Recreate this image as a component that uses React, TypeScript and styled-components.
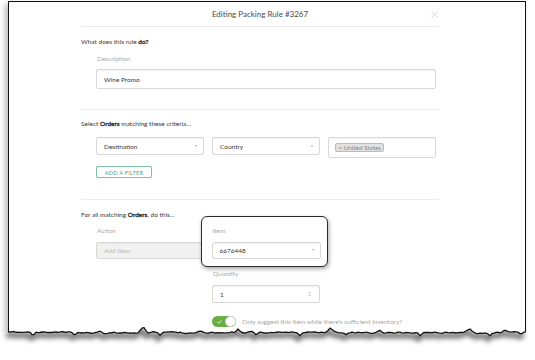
import React from "react";
import styled, { createGlobalStyle } from "styled-components";

const GlobalStyle = createGlobalStyle`
  html, body {
    margin: 0;
    padding: 0;
    background: #fff;
    overflow: hidden;
  }
  body {
    font-family: Lato, "Open Sans", sans-serif;
    -webkit-font-smoothing: antialiased;
  }
`;

const Frame = styled.div`
  width: 518px;
  margin: 1px 0 0 8px;
`;

const Paper = styled.div`
  box-sizing: border-box;
  height: 341px;
  border: 1.5px solid #111;
  border-bottom: none;
  background: #fff;
  box-shadow: -3px 3px 6px rgba(0, 0, 0, 0.28);
  padding-left: 72px;
`;

const Inner = styled.div`
  width: 358px;
`;

const TitleBar = styled.div`
  height: 24px;
  display: grid;
  grid-template-columns: 1fr auto 1fr;
  align-items: center;
  border-bottom: 1px solid #e8e8e8;
`;

const Title = styled.div`
  grid-column: 2;
  font-size: 8px;
  color: #4a4a4a;
`;

const Close = styled.svg`
  justify-self: end;
  width: 7px;
  height: 7px;
  margin-right: 1px;
`;

const Section = styled.div<{ $top: number; $bottom: number; $last?: boolean }>`
  padding: ${(p) => p.$top}px 0 ${(p) => p.$bottom}px;
  border-bottom: ${(p) => (p.$last ? "none" : "1px solid #ececec")};
`;

const Heading = styled.div`
  font-size: 6.5px;
  line-height: 8px;
  color: #3a3a3a;
  b {
    color: #1e1e1e;
    font-weight: 400;
    -webkit-text-stroke: 0.3px #1e1e1e;
  }
`;

const Fields = styled.div<{ $mt: number; $rowGap?: number }>`
  display: grid;
  grid-template-columns: 108px 108px 108px;
  column-gap: 8px;
  row-gap: ${(p) => p.$rowGap ?? 0}px;
  align-items: start;
  padding-left: 15px;
  margin-top: ${(p) => p.$mt}px;
`;

const Field = styled.div<{ $gap: number; $col?: string }>`
  display: flex;
  flex-direction: column;
  gap: ${(p) => p.$gap}px;
  grid-column: ${(p) => p.$col ?? "auto"};
`;

const Highlight = styled(Field)`
  position: relative;
  z-index: 1;
  margin: -11px -8px -9px -11px;
  padding: 9.5px 6.5px 7.5px 9.5px;
  border: 1.5px solid #2b2b2b;
  border-radius: 6px;
  background: #fff;
  box-shadow: 1px 2px 4px rgba(0, 0, 0, 0.35);
`;

const Label = styled.div`
  font-size: 6.5px;
  line-height: 8px;
  color: #a9a9a9;
  padding-left: 1px;
`;

const Box = styled.div<{ $h: number; $disabled?: boolean }>`
  box-sizing: border-box;
  height: ${(p) => p.$h}px;
  border: 1px solid #d8d8d8;
  border-radius: 2px;
  background: ${(p) => (p.$disabled ? "#f1f1f1" : "#fff")};
  box-shadow: inset 0 1px 1px rgba(0, 0, 0, 0.05);
  display: flex;
  align-items: center;
  padding: 0 6px 0 7px;
  font-size: 6.5px;
  color: ${(p) => (p.$disabled ? "#b8b8b8" : "#3a3a3a")};
`;

const Caret = styled.span`
  margin-left: auto;
  width: 0;
  height: 0;
  border-left: 1.5px solid transparent;
  border-right: 1.5px solid transparent;
  border-top: 2px solid #aaa;
`;

const Spinner = styled.svg`
  margin-left: auto;
  margin-right: 2px;
  width: 3px;
  height: 6px;
`;

const Tag = styled.span`
  display: inline-flex;
  align-items: center;
  height: 9px;
  box-sizing: border-box;
  padding: 0 2.5px;
  margin-left: -1px;
  background: #e1e1e1;
  border: 1px solid #bbbbbb;
  border-radius: 2px;
  font-size: 6.3px;
  color: #888;
`;

const FilterButton = styled.div`
  box-sizing: border-box;
  width: 56px;
  height: 12px;
  margin: 8px 0 0 15px;
  border: 1px solid #7cc2a3;
  border-radius: 1px;
  display: flex;
  align-items: center;
  justify-content: center;
  font-size: 5.7px;
  letter-spacing: 0.2px;
  color: #5a9f80;
`;

const ToggleRow = styled.div`
  grid-column: 2 / 4;
  display: flex;
  align-items: center;
  gap: 6px;
  margin-top: 2px;
  font-size: 6.5px;
  color: #a8a8a8;
  white-space: nowrap;
`;

const Toggle = styled.div`
  box-sizing: border-box;
  width: 24px;
  height: 11px;
  border-radius: 6px;
  background: #6aaf45;
  display: flex;
  align-items: center;
  justify-content: space-between;
  padding-left: 5px;
`;

const Knob = styled.span`
  box-sizing: border-box;
  width: 11px;
  height: 11px;
  border-radius: 50%;
  background: #fff;
  border: 1px solid #d4d4d4;
`;

const Tear = styled.svg`
  position: relative;
  display: block;
  margin: -20px 0 0 -8px;
`;

// torn paper edge, page y minus 322
const tearLine = (() => {
  let seed = 11;
  const rnd = () => {
    seed = (seed * 16807) % 2147483647;
    return seed / 2147483647;
  };
  const feats: [number, number, number][] = [
    [33, 4.5, 2.5], [75, 3.5, 2.5], [100, -2, 4], [143, -7, 5], [160, 3.5, 3],
    [200, -1.5, 5], [238, -3.5, 4], [256, 3, 3], [300, 3, 3], [330, -4.5, 5],
    [346, 2, 3], [380, -2, 4], [420, 3, 3], [470, -3.5, 5], [490, 2.5, 3],
    [505, -4, 4], [521, 2, 3],
  ];
  let drift = 0;
  const pts: [number, number][] = [];
  for (let x = 8; x <= 527; x += 2) {
    drift += (rnd() - 0.5) * 1.8;
    drift *= 0.7;
    let y = 10.5 + drift;
    for (const [fx, dy, hw] of feats) {
      y += dy * Math.max(0, 1 - Math.abs(x - fx) / hw);
    }
    pts.push([x, Math.round(y * 10) / 10]);
  }
  return pts;
})();

const linePath = "M" + tearLine.map(([x, y]) => `${x} ${y}`).join(" L");
const belowPath =
  `M0 ${tearLine[0][1]} L` +
  tearLine.map(([x, y]) => `${x} ${y}`).join(" L") +
  ` L535 ${tearLine[tearLine.length - 1][1]} L535 38 L0 38 Z`;

export default function App() {
  return (
    <>
      <GlobalStyle />
      <Frame>
        <Paper>
          <Inner>
            <TitleBar>
              <Title>Editing Packing Rule #3267</Title>
              <Close viewBox="0 0 7 7">
                <path d="M0.5 0.5 L6.5 6.5 M6.5 0.5 L0.5 6.5" stroke="#cfcfcf" strokeWidth="0.8" />
              </Close>
            </TitleBar>

            <Section $top={11} $bottom={20}>
              <Heading>
                What does this rule <b>do?</b>
              </Heading>
              <Fields $mt={9}>
                <Field $gap={6} $col="1 / -1">
                  <Label>Description</Label>
                  <Box $h={20}>Wine Promo</Box>
                </Field>
              </Fields>
            </Section>

            <Section $top={10} $bottom={21}>
              <Heading>
                Select <b>Orders</b> matching these criteria...
              </Heading>
              <Fields $mt={9}>
                <Box $h={18}>
                  Destination
                  <Caret />
                </Box>
                <Box $h={18}>
                  Country
                  <Caret />
                </Box>
                <Box $h={21}>
                  <Tag>× United States</Tag>
                </Box>
              </Fields>
              <FilterButton>ADD A FILTER</FilterButton>
            </Section>

            <Section $top={11} $bottom={0} $last>
              <Heading>
                For all matching <b>Orders</b>, do this...
              </Heading>
              <Fields $mt={8} $rowGap={11}>
                <Field $gap={7}>
                  <Label>Action</Label>
                  <Box $h={17} $disabled>
                    Add Item
                  </Box>
                </Field>
                <Highlight $gap={7}>
                  <Label>Item</Label>
                  <Box $h={17}>
                    6676448
                    <Caret />
                  </Box>
                </Highlight>
                <div />
                <Field $gap={7} $col="2">
                  <Label>Quantity</Label>
                  <Box $h={18}>
                    1
                    <Spinner viewBox="0 0 3 6">
                      <path d="M0 2.3 L1.5 0.5 L3 2.3 Z M0 3.7 L1.5 5.5 L3 3.7 Z" fill="#c4c4c4" />
                    </Spinner>
                  </Box>
                </Field>
                <ToggleRow>
                  <Toggle>
                    <svg width="5" height="4" viewBox="0 0 5 4">
                      <path d="M0.4 2 L1.8 3.3 L4.6 0.5" stroke="#fff" strokeWidth="0.9" fill="none" />
                    </svg>
                    <Knob />
                  </Toggle>
                  Only suggest this item while there's sufficient inventory?
                </ToggleRow>
              </Fields>
            </Section>
          </Inner>
        </Paper>
        <Tear width="535" height="38" viewBox="0 0 535 38">
          <defs>
            <clipPath id="below">
              <path d={belowPath} />
            </clipPath>
            <filter id="soft" filterUnits="userSpaceOnUse" x="-20" y="-20" width="580" height="80">
              <feGaussianBlur stdDeviation="2.6" />
            </filter>
          </defs>
          <path d={belowPath} fill="#fff" />
          <g clipPath="url(#below)">
            <path
              d={linePath}
              transform="translate(-2 3)"
              stroke="rgba(0,0,0,0.6)"
              strokeWidth="5"
              fill="none"
              filter="url(#soft)"
            />
          </g>
          <path d={linePath} stroke="#111" strokeWidth="1.3" fill="none" strokeLinejoin="round" />
        </Tear>
      </Frame>
    </>
  );
}
